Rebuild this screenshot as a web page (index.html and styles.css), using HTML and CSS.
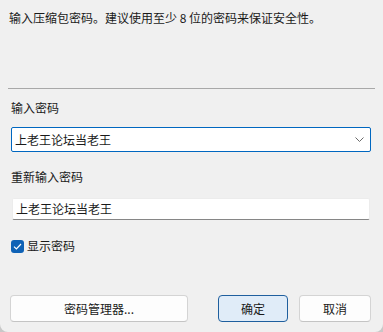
FILE: index.html
```html
<!DOCTYPE html>
<html lang="zh-CN">
<head>
<meta charset="utf-8">
<link rel="stylesheet" href="styles.css">
</head>
<body>
<div class="dialog">
  <p class="desc">输入压缩包密码。建议使用至少 8 位的密码来保证安全性。</p>
  <div class="sep"></div>
  <div class="label first">输入密码</div>
  <div class="combo">
    <span class="value">上老王论坛当老王</span>
    <svg class="chev" width="9" height="5" viewBox="0 0 9 5"><path d="M0.5 0.5 L4.5 4.5 L8.5 0.5" fill="none" stroke="#6a6a6a" stroke-width="1"/></svg>
  </div>
  <div class="label second">重新输入密码</div>
  <div class="field"><span class="value">上老王论坛当老王</span></div>
  <label class="check">
    <span class="box"><svg width="9" height="7" viewBox="0 0 9 7"><path d="M1 3.6 L3.4 6 L8 1" fill="none" stroke="#fff" stroke-width="1.2"/></svg></span>
    <span>显示密码</span>
  </label>
  <div class="buttons">
    <button class="btn mgr">密码管理器...</button>
    <div class="right">
      <button class="btn primary">确定</button>
      <button class="btn cancel">取消</button>
    </div>
  </div>
</div>
</body>
</html>
```
FILE: styles.css
```css
html, body {
  margin: 0;
  padding: 0;
  background: #c8c8c8;
}
body {
  width: 383px;
  height: 332px;
  overflow: hidden;
  font-family: "Noto Sans CJK SC", "Liberation Sans", sans-serif;
  font-size: 12px;
  color: #1a1a1a;
}
.dialog {
  box-sizing: border-box;
  width: 383px;
  height: 332px;
  background: #f0f0f0;
  border-radius: 0 0 8px 8px;
  padding: 0 12px 0 10px;
  display: flex;
  flex-direction: column;
}
.desc {
  margin: 9px 0 0 -1px;
  line-height: 18px;
  height: 18px;
}
.sep {
  height: 1px;
  background: #a8a8a8;
  margin: 61px -4px 0 -2px;
}
.label {
  line-height: 18px;
  height: 18px;
}
.label.first { margin-top: 10px; padding-left: 1px; }
.label.second { margin-top: 16px; padding-left: 1px; }
.combo {
  margin-top: 10px;
  margin-left: 1px;
  height: 25px;
  box-sizing: border-box;
  border: 1px solid #0067c0;
  border-radius: 2px;
  background: #fff;
  display: flex;
  align-items: center;
  justify-content: space-between;
  padding: 0 6px 0 3px;
}
.value {
  font-size: 12px;
  line-height: 18px;
  color: #1a1a1a;
}
.chev { display: block; }
.field {
  margin-top: 12px;
  margin-left: 2px;
  margin-right: 1px;
  height: 22px;
  box-sizing: border-box;
  background: #fff;
  border: 1px solid #ececec;
  border-bottom: 1px solid #868686;
  border-radius: 2px;
  display: flex;
  align-items: center;
  padding: 0 3px;
}
.check {
  margin-top: 19px;
  margin-left: 1px;
  display: flex;
  align-items: center;
  gap: 3px;
  line-height: 14px;
  height: 14px;
}
.box {
  width: 13px;
  height: 13px;
  border-radius: 3px;
  background: #0f62b6;
  display: flex;
  align-items: center;
  justify-content: center;
}
.box svg { display: block; }
.buttons {
  margin-top: 42px;
  display: flex;
  justify-content: space-between;
  align-items: center;
}
.right {
  display: flex;
  gap: 11px;
}
.btn {
  font-family: "Noto Sans CJK SC", "Liberation Sans", sans-serif;
  font-size: 12px;
  color: #1a1a1a;
  height: 27px;
  box-sizing: border-box;
  background: #fdfdfd;
  border: 1px solid #d4d4d4;
  border-bottom-color: #c4c4c4;
  border-radius: 4px;
  padding: 0;
  margin: 0;
}
.mgr { width: 178px; }
.primary {
  width: 70px;
  background: #e0ecf8;
  border: 1px solid #1f5f9e;
}
.cancel { width: 72px; }
```
